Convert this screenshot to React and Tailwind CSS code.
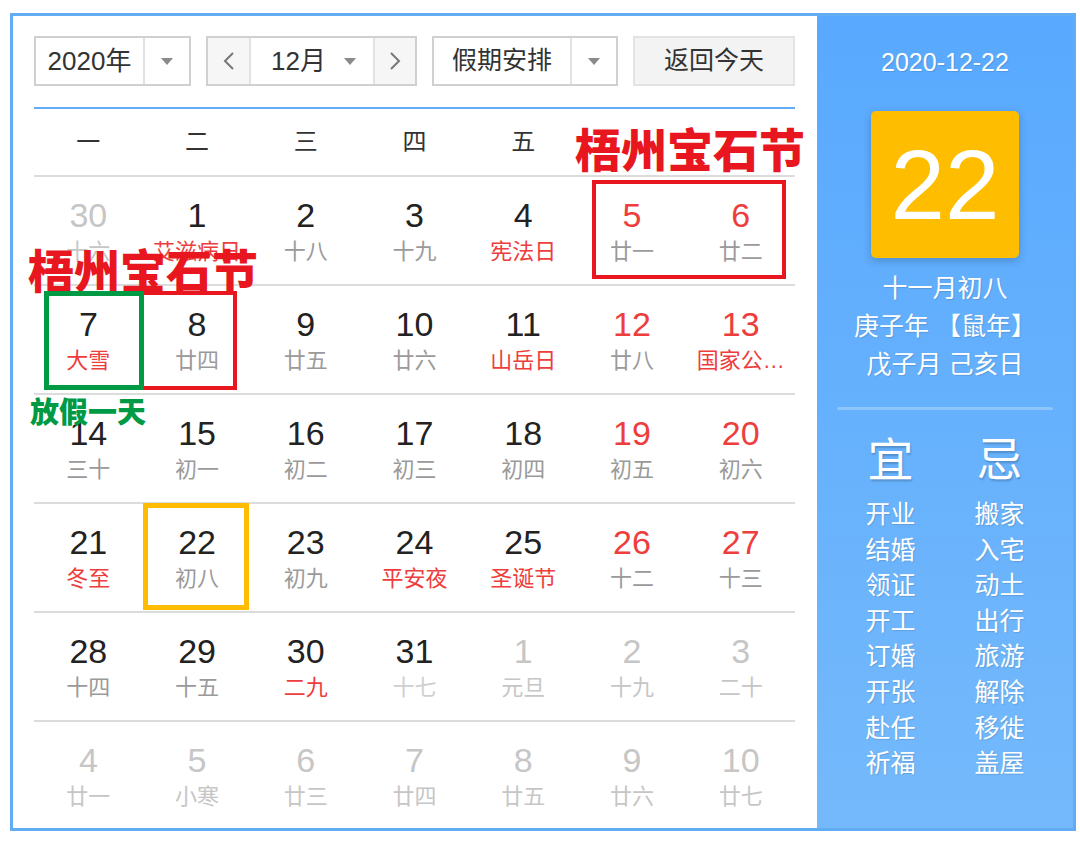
import React from 'react'

// flags: o = other month, w = weekend (red number), f = festival (red lunar), g = faded lunar
const rows = [
  [[30, '十六', 'o'], [1, '艾滋病日', 'f'], [2, '十八', ''], [3, '十九', ''], [4, '宪法日', 'f'], [5, '廿一', 'w'], [6, '廿二', 'w']],
  [[7, '大雪', 'f'], [8, '廿四', ''], [9, '廿五', ''], [10, '廿六', ''], [11, '山岳日', 'f'], [12, '廿八', 'w'], [13, '国家公…', 'wf']],
  [[14, '三十', ''], [15, '初一', ''], [16, '初二', ''], [17, '初三', ''], [18, '初四', ''], [19, '初五', 'w'], [20, '初六', 'w']],
  [[21, '冬至', 'f'], [22, '初八', 's'], [23, '初九', ''], [24, '平安夜', 'f'], [25, '圣诞节', 'f'], [26, '十二', 'w'], [27, '十三', 'w']],
  [[28, '十四', ''], [29, '十五', ''], [30, '二九', 'f'], [31, '十七', 'g'], [1, '元旦', 'o'], [2, '十九', 'o'], [3, '二十', 'o']],
  [[4, '廿一', 'o'], [5, '小寒', 'o'], [6, '廿三', 'o'], [7, '廿四', 'o'], [8, '廿五', 'o'], [9, '廿六', 'o'], [10, '廿七', 'o']],
]

const yi = ['开业', '结婚', '领证', '开工', '订婚', '开张', '赴任', '祈福']
const ji = ['搬家', '入宅', '动土', '出行', '旅游', '解除', '移徙', '盖屋']

const Caret = () => (
  <span className="w-0 h-0 border-x-[6px] border-x-transparent border-t-[7px] border-t-[#8a8a8a]" />
)

const Chevron = ({ dir }) => (
  <svg width="12" height="20" viewBox="0 0 12 20">
    <polyline
      points={dir === 'left' ? '10,2 2,10 10,18' : '2,2 10,10 2,18'}
      fill="none"
      stroke="#777"
      strokeWidth="2"
    />
  </svg>
)

function Cell({ d }) {
  const [n, l, f] = d
  let numCls = 'text-[#222]'
  let lunCls = 'text-[#9a9a9a]'
  if (f.includes('o')) { numCls = 'text-[#c6c6c6]'; lunCls = 'text-[#c6c6c6]' }
  if (f.includes('w')) numCls = 'text-[#ee3d3d]'
  if (f.includes('f')) lunCls = 'text-[#ee3d3d]'
  if (f.includes('g')) lunCls = 'text-[#cfcfcf]'
  return (
    <div className="relative flex flex-col items-center">
      <div className={`mt-[18px] text-[34px] leading-[40px] ${numCls}`}>{n}</div>
      <div className={`mt-[3px] text-[22px] leading-[28px] whitespace-nowrap ${lunCls}`}>{l}</div>
      {f.includes('s') && (
        <div className="absolute left-0 top-[-1px] w-[106px] h-[107px] border-[5px] border-[#ffbc00]" />
      )}
    </div>
  )
}

export default function App() {
  return (
    <div className="relative w-[1080px] h-[843px] bg-white overflow-hidden pt-[13px] pl-[10px] font-['Liberation_Sans','Noto_Sans_CJK_SC',sans-serif]">
      <div className="flex w-[1066px] h-[818px] border-[3px] border-[#62acf6]">
        {/* calendar */}
        <div className="w-[804px] bg-white pl-[21px] pr-[22px] pt-[20px] overflow-hidden">
          <div className="flex h-[50px] gap-[15px] text-[#333]">
            <div className="flex w-[157px] border-2 border-[#d0d0d0]">
              <div className="w-[107px] flex items-center justify-center text-[26px]">2020年</div>
              <div className="flex-1 flex items-center justify-center border-l-2 border-[#e2e2e2]"><Caret /></div>
            </div>
            <div className="flex w-[211px] border-2 border-[#d0d0d0]">
              <div className="w-[43px] flex items-center justify-center bg-[#f6f6f6] border-r-2 border-[#e2e2e2]"><Chevron dir="left" /></div>
              <div className="w-[122px] flex items-center pl-[20px] text-[26px]">
                12月
                <span className="ml-[18px] flex"><Caret /></span>
              </div>
              <div className="flex-1 flex items-center justify-center bg-[#f6f6f6] border-l-2 border-[#e2e2e2]"><Chevron dir="right" /></div>
            </div>
            <div className="flex w-[186px] border-2 border-[#d0d0d0]">
              <div className="w-[136px] flex items-center justify-center text-[25px]">假期安排</div>
              <div className="flex-1 flex items-center justify-center border-l-2 border-[#e2e2e2]"><Caret /></div>
            </div>
            <div className="w-[162px] flex items-center justify-center bg-[#f3f3f3] border-2 border-[#e3e3e3] text-[25px]">返回今天</div>
          </div>

          <div className="mt-[21px] h-[2px] bg-[#62acf6]" />

          <div className="grid grid-cols-7 h-[68px] border-b-2 border-[#dcdcdc] text-[24px] text-[#333]">
            {['一', '二', '三', '四', '五', '六', '日'].map(w => (
              <div key={w} className="flex items-center justify-center">{w}</div>
            ))}
          </div>

          {rows.map((r, i) => (
            <div key={i} className={`grid grid-cols-7 h-[109px] ${i < 5 ? 'border-b-2 border-[#dcdcdc]' : ''}`}>
              {r.map((d, j) => <Cell key={j} d={d} />)}
            </div>
          ))}
        </div>

        {/* side panel */}
        <div className="flex-1 flex flex-col items-center bg-gradient-to-b from-[#58a9ff] to-[#74b9fb] text-white [text-shadow:1px_1px_1px_rgba(0,0,0,0.12)]">
          <div className="mt-[31px] text-[25px] leading-[30px]">2020-12-22</div>
          <div className="mt-[34px] w-[148px] h-[147px] rounded-[5px] bg-[#ffbd00] shadow-[0_3px_8px_rgba(0,0,0,0.2)] flex items-center justify-center text-[98px] leading-none [text-shadow:none]">
            22
          </div>
          <div className="mt-[11px] flex flex-col items-center text-[25px] leading-[38px]">
            <div>十一月初八</div>
            <div>庚子年 【鼠年】</div>
            <div>戊子月 己亥日</div>
          </div>
          <div className="mt-[24px] w-[216px] h-[3px] rounded bg-[#8ec6fb]" />
          <div className="flex gap-[49px] mt-[24px]">
            {[['宜', yi], ['忌', ji]].map(([h, list]) => (
              <div key={h} className="w-[60px] flex flex-col items-center">
                <div className="text-[46px] leading-[52px] [text-shadow:1px_2px_2px_rgba(0,0,0,0.2)]">{h}</div>
                <div className="mt-[11px] flex flex-col items-center text-[25px] leading-[35.6px]">
                  {list.map(t => <div key={t}>{t}</div>)}
                </div>
              </div>
            ))}
          </div>
        </div>
      </div>

      {/* annotations */}
      <div className="absolute left-[575px] top-[121px] bg-white text-[46px] leading-[52px] font-black text-[#e8161f] font-['Noto_Sans_CJK_SC',sans-serif]">梧州宝石节</div>
      <div className="absolute left-[592px] top-[180px] w-[194px] h-[99px] border-4 border-[#e8161f]" />
      <div className="absolute left-[28px] top-[242px] text-[46px] leading-[52px] font-black text-[#e8161f] font-['Noto_Sans_CJK_SC',sans-serif]">梧州宝石节</div>
      <div className="absolute left-[140px] top-[291px] w-[97px] h-[99px] border-4 border-[#e8161f]" />
      <div className="absolute left-[44px] top-[291px] w-[100px] h-[99px] border-[5px] border-[#009a44]" />
      <div className="absolute left-[30px] top-[393px] text-[29px] leading-[34px] font-black text-[#009a44] font-['Noto_Sans_CJK_SC',sans-serif]">放假一天</div>
    </div>
  )
}
